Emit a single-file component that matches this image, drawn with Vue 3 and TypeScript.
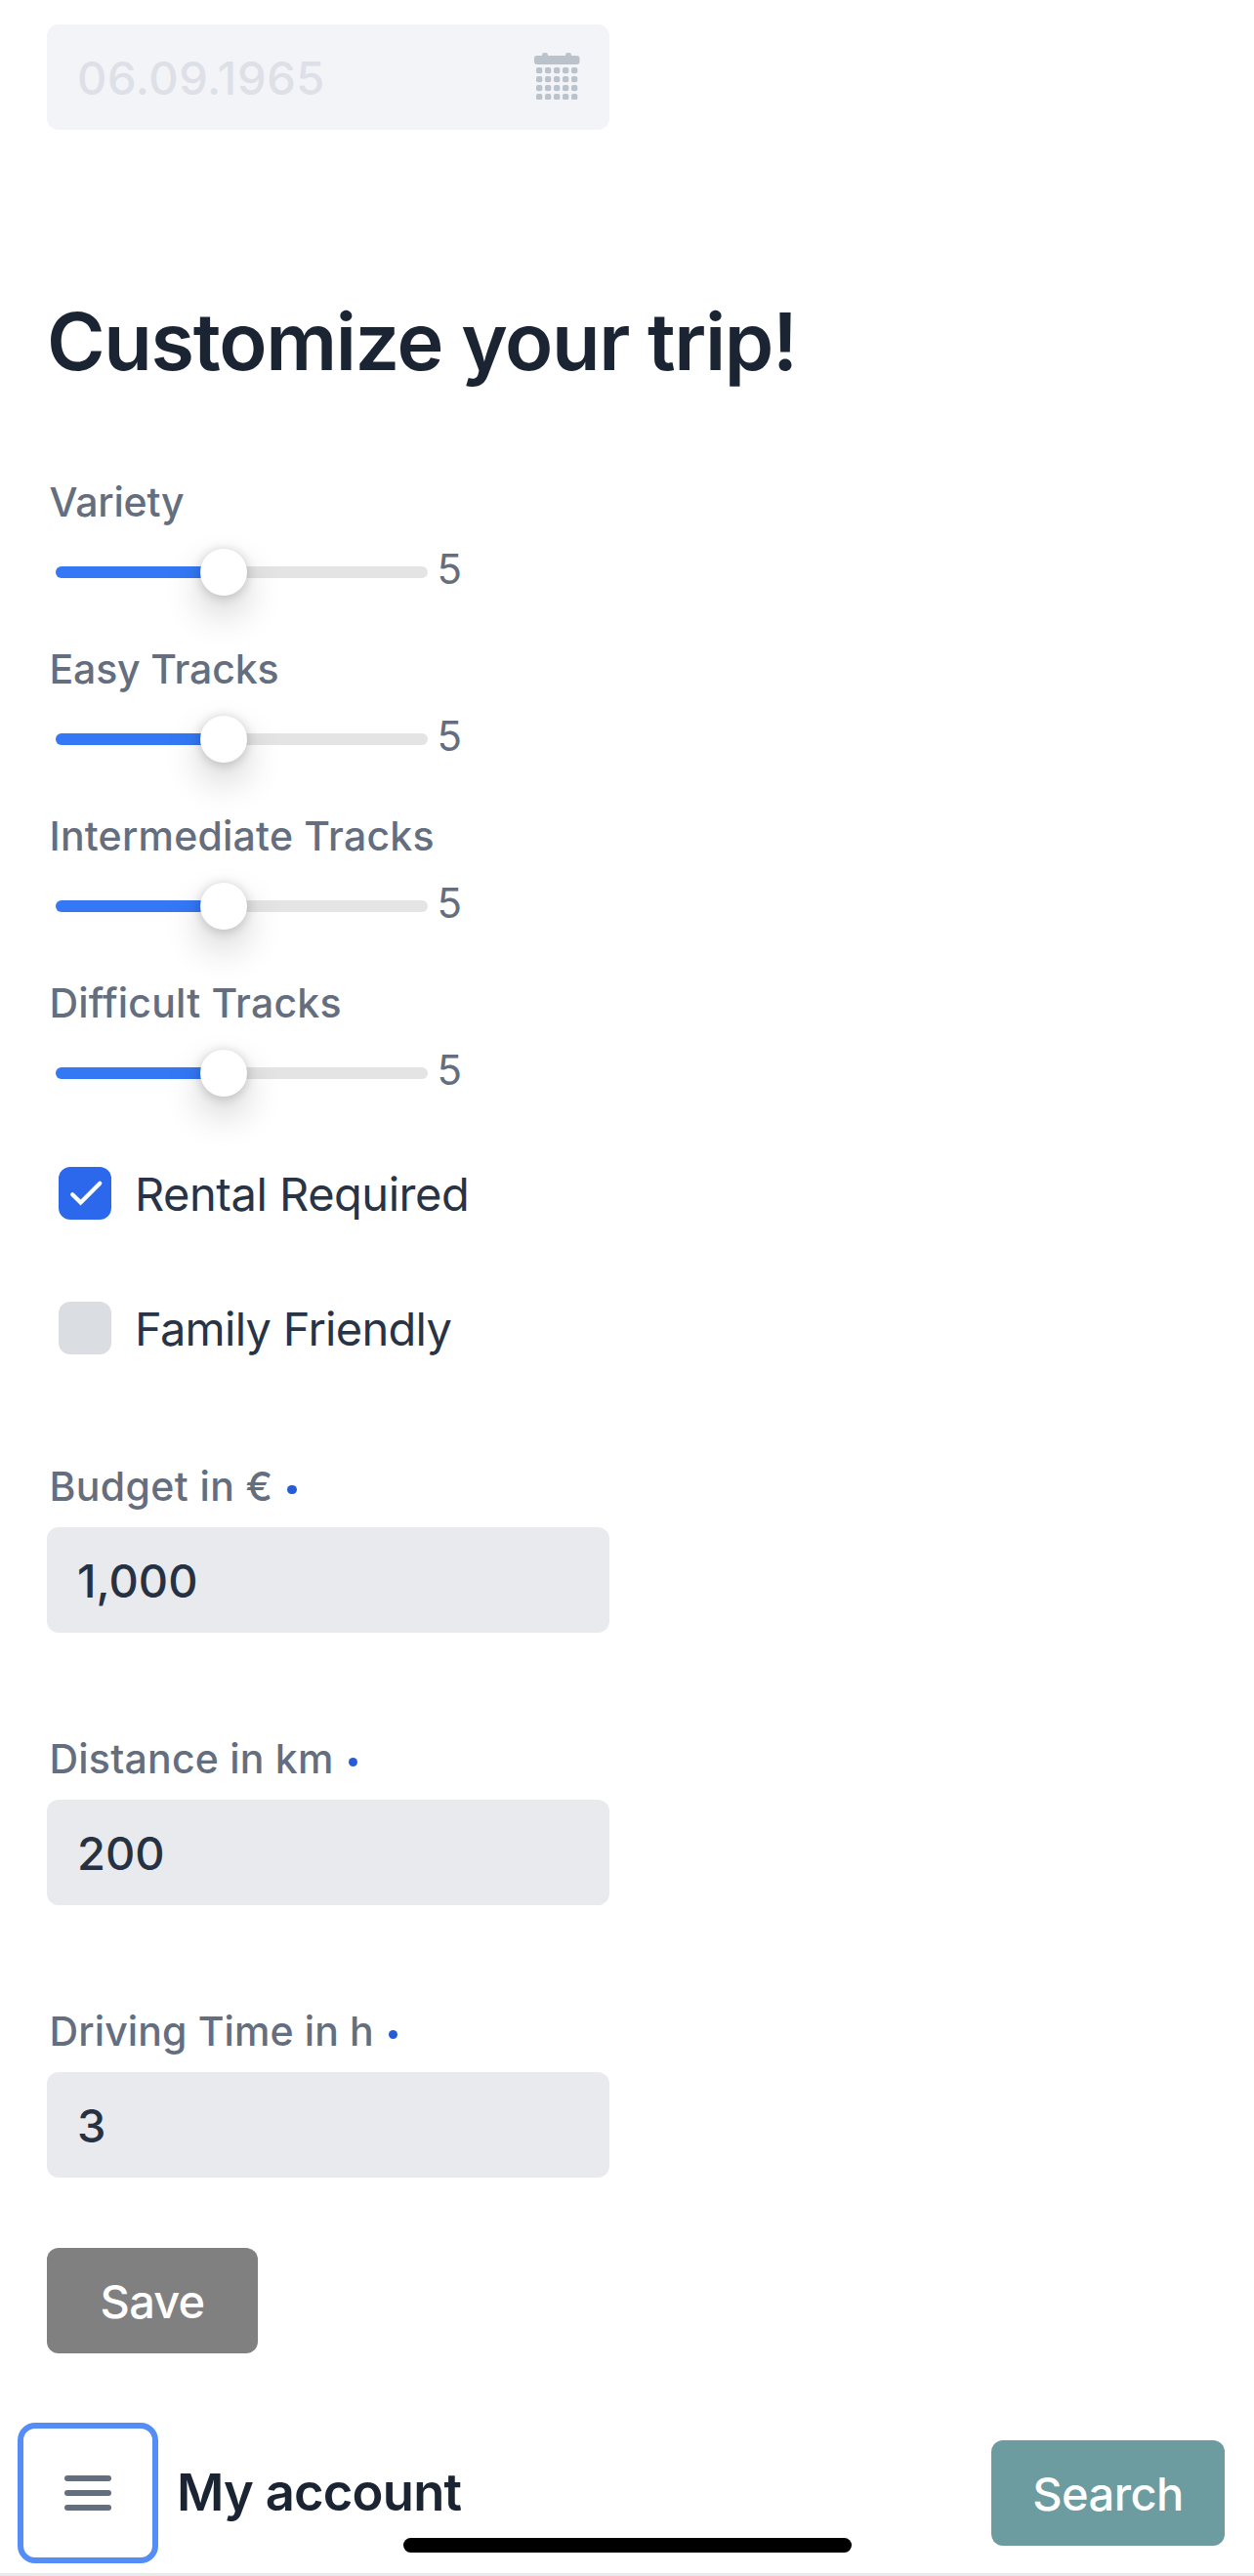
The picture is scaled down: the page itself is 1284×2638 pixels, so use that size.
<script setup lang="ts">
import { reactive } from 'vue'

interface Slider { label: string; key: string; value: number }
interface Field { label: string; key: string; value: string }

const min = 1
const max = 10
const trackWidth = 381
const thumbSize = 48

const sliders = reactive<Slider[]>([
  { label: 'Variety', key: 'variety', value: 5 },
  { label: 'Easy Tracks', key: 'easy', value: 5 },
  { label: 'Intermediate Tracks', key: 'intermediate', value: 5 },
  { label: 'Difficult Tracks', key: 'difficult', value: 5 },
])

const options = reactive([
  { label: 'Rental Required', key: 'rental', checked: true },
  { label: 'Family Friendly', key: 'family', checked: false },
])

const fields = reactive<Field[]>([
  { label: 'Budget in €', key: 'budget', value: '1,000' },
  { label: 'Distance in km', key: 'distance', value: '200' },
  { label: 'Driving Time in h', key: 'driving', value: '3' },
])

const thumbOffset = (value: number) =>
  ((value - min) / (max - min)) * (trackWidth - thumbSize)
</script>

<template>
  <div class="page">
    <main class="content">
      <div class="box date">
        <span class="date-text">06.09.1965</span>
        <svg class="calendar" width="48" height="48" viewBox="0 0 48 48" fill="currentColor">
          <rect x="1" y="3" width="46.5" height="9" rx="3" />
          <rect x="9" y="0" width="6" height="6" rx="2.5" />
          <rect x="33" y="0" width="6" height="6" rx="2.5" />
          <template v-for="r in 4" :key="r">
            <rect
              v-for="c in 5"
              :key="c"
              :x="3 + (c - 1) * 9"
              :y="15 + (r - 1) * 9"
              width="6.3"
              height="6.3"
              rx="2"
            />
          </template>
        </svg>
      </div>

      <h2 class="title">Customize your trip!</h2>

      <div v-for="s in sliders" :key="s.key" class="slider-group">
        <div class="label" :class="s.key">{{ s.label }}</div>
        <div class="slider-row">
          <div class="track">
            <div class="fill" :style="{ width: thumbOffset(s.value) + thumbSize / 2 + 'px' }"></div>
            <div class="thumb" :style="{ left: thumbOffset(s.value) + 'px' }"></div>
          </div>
          <span class="slider-value">{{ s.value }}</span>
        </div>
      </div>

      <div class="checks">
        <div v-for="o in options" :key="o.key" class="check-row" @click="o.checked = !o.checked">
          <span class="checkbox" :class="{ checked: o.checked }">
            <svg v-if="o.checked" width="54" height="54" viewBox="0 0 54 54" fill="none">
              <path
                d="M14.2 28.2L22.6 36.5L42.3 16.8"
                stroke="#fff"
                stroke-width="4.2"
                stroke-linecap="round"
                stroke-linejoin="miter"
              />
            </svg>
          </span>
          <span class="check-label" :class="o.key">{{ o.label }}</span>
        </div>
      </div>

      <div class="fields">
        <div v-for="f in fields" :key="f.key">
          <div class="label required" :class="f.key">{{ f.label }}<i class="dot"></i></div>
          <div class="box">{{ f.value }}</div>
        </div>
      </div>

      <button class="button save">Save</button>
    </main>

    <footer class="bar">
      <button class="menu">
        <svg width="48" height="38" viewBox="0 0 48 38" fill="currentColor">
          <rect x="0" y="1" width="48" height="6" rx="3" />
          <rect x="0" y="16" width="48" height="6" rx="3" />
          <rect x="0" y="31" width="48" height="6" rx="3" />
        </svg>
      </button>
      <h1 class="account">My account</h1>
      <button class="button search">Search</button>
      <div class="home"></div>
    </footer>
    <div class="rule"></div>
  </div>
</template>

<style>
body {
  background: #fff;
}
</style>

<style scoped>
.page {
  box-sizing: border-box;
  width: 1284px;
  height: 2638px;
  overflow: hidden;
  padding-top: 25px;
  background: #fff;
  font-family: Inter, "Liberation Sans", sans-serif;
  color: #283445;
}
.content {
  padding: 0 48px;
}
.box {
  box-sizing: border-box;
  width: 576px;
  height: 108px;
  padding: 0 30px 0 31px;
  border-radius: 12px;
  background: #e8eaed;
  color: #263243;
  font-size: 47px;
  font-weight: 500;
  line-height: 110px;
}
.date {
  display: flex;
  justify-content: space-between;
  background: #f3f4f7;
  color: #dee0e8;
}
.date-text {
  letter-spacing: 0.6px;
}
.calendar {
  margin-top: 29px;
  color: #bac2cc;
}
.title {
  margin: 167px 0 89px;
  color: #1a2433;
  font-size: 81px;
  font-weight: 600;
  line-height: 100px;
  letter-spacing: -1.35px;
}
.slider-group {
  height: 171px;
}
.label {
  padding-left: 2.5px;
  color: #646e7e;
  font-size: 41px;
  font-weight: 500;
  line-height: 50px;
  white-space: nowrap;
}
.variety { letter-spacing: -0.2px; }
.easy { letter-spacing: -0.16px; }
.intermediate { letter-spacing: 0.23px; }
.difficult { letter-spacing: 0.2px; }
.budget { letter-spacing: 0.38px; }
.distance { letter-spacing: 0.22px; }
.driving { letter-spacing: 0.12px; }

.slider-row {
  display: flex;
  align-items: flex-start;
  margin-top: 19px;
  padding-left: 9px;
}
.track {
  position: relative;
  width: 381px;
  height: 12px;
  margin-top: 22px;
  border-radius: 6px;
  background: #e4e4e4;
}
.fill {
  height: 12px;
  border-radius: 6px 0 0 6px;
  background: #3478f6;
}
.thumb {
  position: absolute;
  top: -18px;
  width: 48px;
  height: 48px;
  border-radius: 50%;
  background: #fff;
  box-shadow: 0 1.5px 12px rgba(0, 0, 0, 0.2), 0 18px 39px rgba(0, 0, 0, 0.2);
}
.slider-value {
  margin-left: 9.5px;
  color: #646e7e;
  font-size: 42px;
  line-height: 50px;
}
.checks {
  display: flex;
  flex-direction: column;
  gap: 84px;
  margin: 22px 0 110px;
}
.check-row {
  display: flex;
  align-items: flex-start;
  gap: 24px;
  height: 54px;
  padding-left: 12px;
}
.checkbox {
  width: 54px;
  height: 54px;
  border-radius: 12px;
  background: #dadde2;
}
.checkbox.checked {
  background: #2c68ec;
}
.checkbox svg {
  display: block;
}
.check-label {
  font-size: 47px;
  line-height: 56px;
}
.rental { letter-spacing: -0.47px; }
.family { letter-spacing: -0.72px; }

.fields {
  display: flex;
  flex-direction: column;
  gap: 104px;
}
.required {
  display: flex;
  margin-bottom: 17px;
}
.dot {
  width: 9.5px;
  height: 9.5px;
  margin: 23.5px 0 0 15px;
  border-radius: 50%;
  background: #265dd7;
}
.button {
  display: block;
  height: 108px;
  padding: 0;
  border: 0;
  border-radius: 12px;
  color: #fff;
  font-family: inherit;
  font-size: 47px;
  font-weight: 500;
  line-height: 110px;
}
.save {
  width: 216px;
  margin-top: 72px;
  background: #808080;
  letter-spacing: -0.81px;
}
.bar {
  position: relative;
  display: flex;
  align-items: center;
  height: 144px;
  margin-top: 71px;
  padding: 0 30px 0 18px;
}
.menu {
  display: flex;
  align-items: center;
  justify-content: center;
  box-sizing: border-box;
  width: 144px;
  height: 144px;
  padding: 0;
  border: 6px solid #548df5;
  border-radius: 18px;
  background: #fff;
  color: #636e7f;
}
.account {
  margin: 0 auto 3px 19px;
  color: #1a2433;
  font-size: 52.5px;
  font-weight: 600;
  line-height: 64px;
  letter-spacing: -0.78px;
}
.search {
  width: 239px;
  background: #6c9c9f;
  letter-spacing: -0.51px;
}
.home {
  position: absolute;
  top: 118px;
  left: 413px;
  width: 459px;
  height: 15px;
  border-radius: 8px;
  background: #000;
}
.rule {
  height: 3px;
  margin-top: 10px;
  background: #e8eaed;
}
</style>
